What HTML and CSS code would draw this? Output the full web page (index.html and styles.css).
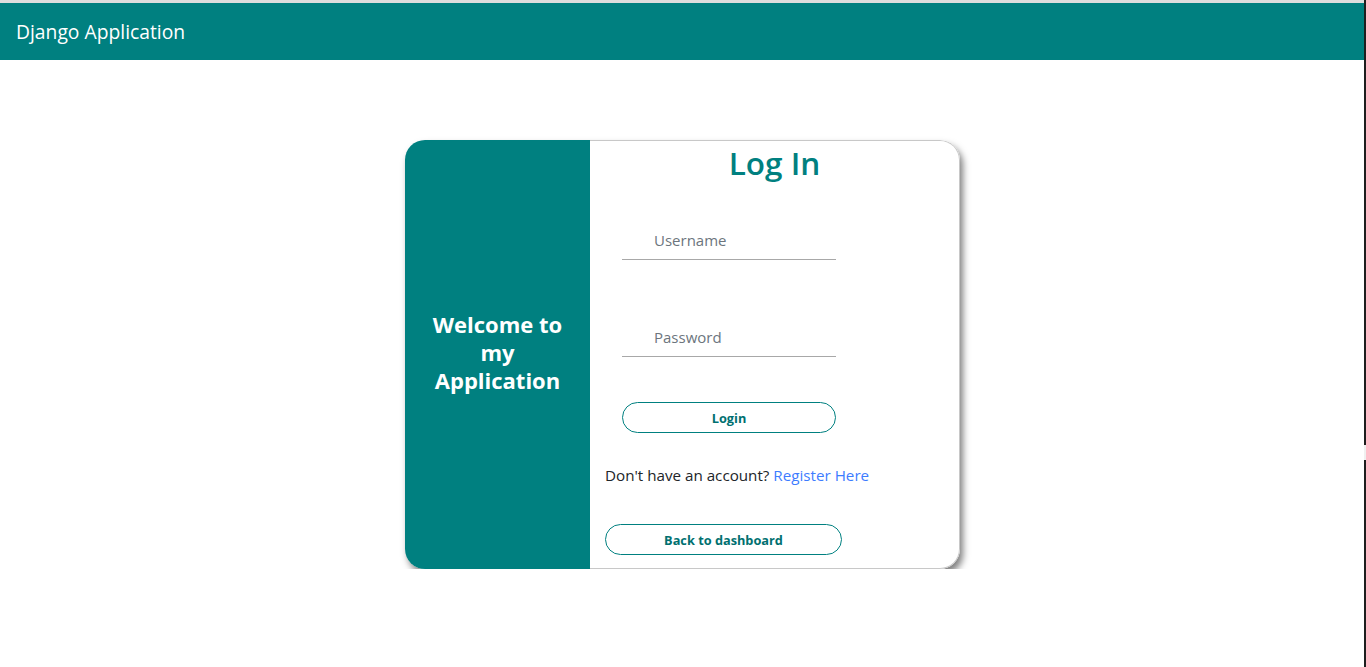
FILE: index.html
```html
<!DOCTYPE html>
<html lang="en">
<head>
<meta charset="utf-8">
<title>Log In</title>
<link rel="stylesheet" href="styles.css">
</head>
<body>
<div class="topline"></div>
<nav class="navbar"><span class="brand">Django Application</span></nav>
<main class="page">
  <div class="card">
    <div class="side">
      <h2 class="welcome">Welcome to my Application</h2>
    </div>
    <div class="panel">
      <h1 class="title">Log In</h1>
      <form class="form">
        <input class="field" type="text" placeholder="Username">
        <input class="field" type="password" placeholder="Password">
        <button class="btn btn-login" type="button">Login</button>
      </form>
      <p class="register">Don't have an account? <a href="#" class="link">Register Here</a></p>
      <button class="btn btn-back" type="button">Back to dashboard</button>
    </div>
  </div>
</main>
<div class="scrollbar"><div class="thumb"></div></div>
</body>
</html>
```
FILE: styles.css
```css
* { box-sizing: border-box; }
html, body { margin: 0; padding: 0; }
body {
  font-family: "Open Sans", "Noto Sans", sans-serif;
  background: #fff;
  color: #212529;
  padding-right: 1px;
}
.topline { height: 3px; background: #dedede; }
.navbar {
  height: 57px;
  background: #008080;
  display: flex;
  align-items: center;
  padding-left: 16px;
}
.brand { color: #fff; font-size: 19.3px; }
.page {
  display: flex;
  justify-content: center;
  padding-top: 80px;
}
.card {
  width: 555px;
  height: 429px;
  display: flex;
  border-radius: 20px;
  overflow: hidden;
  box-shadow: 3px 5px 7px rgba(0,0,0,0.5);
}
.side {
  width: 185px;
  background: #008080;
  display: flex;
  align-items: center;
  justify-content: center;
  padding: 0 25px 6px;
}
.welcome {
  margin: 0;
  color: #fff;
  font-size: 22px;
  line-height: 28px;
  font-weight: 700;
  text-align: center;
}
.panel {
  flex: 1;
  border: 1px solid #c8c8c8;
  border-left: none;
  border-radius: 0 20px 20px 0;
  padding: 0 15px;
}
.title {
  margin: 0;
  text-align: center;
  color: #008080;
  font-size: 31.5px;
  font-weight: 600;
  line-height: 44px;
}
.form {
  display: flex;
  flex-direction: column;
  padding-left: 17px;
  margin-top: 35px;
}
.field {
  width: 214px;
  height: 40px;
  border: none;
  border-bottom: 1px solid #a8a8a8;
  padding: 0 0 0 32px;
  font-family: inherit;
  font-size: 15px;
  color: #495057;
  outline: none;
  margin-bottom: 57px;
}
.field:last-of-type { margin-bottom: 0; }
.field::placeholder { color: #6c757d; }
.btn {
  height: 31px;
  border: 1px solid #008080;
  border-radius: 16px;
  background: #fff;
  color: #007070;
  font-family: inherit;
  font-size: 12.75px;
  font-weight: 700;
}
.btn-login { width: 214px; margin-top: 45px; }
.register {
  margin: 32px 0 0;
  font-size: 15.2px;
  line-height: 20px;
}
.link { color: #3d7cff; text-decoration: none; }
.btn-back { width: 237px; margin-top: 39px; }
.scrollbar {
  position: fixed;
  top: 0;
  right: 0;
  width: 2px;
  height: 100%;
  background: #1e1e1e;
}
.thumb {
  position: absolute;
  top: 445px;
  left: 0;
  width: 2px;
  height: 15px;
  background: #f0f0f0;
}
```
